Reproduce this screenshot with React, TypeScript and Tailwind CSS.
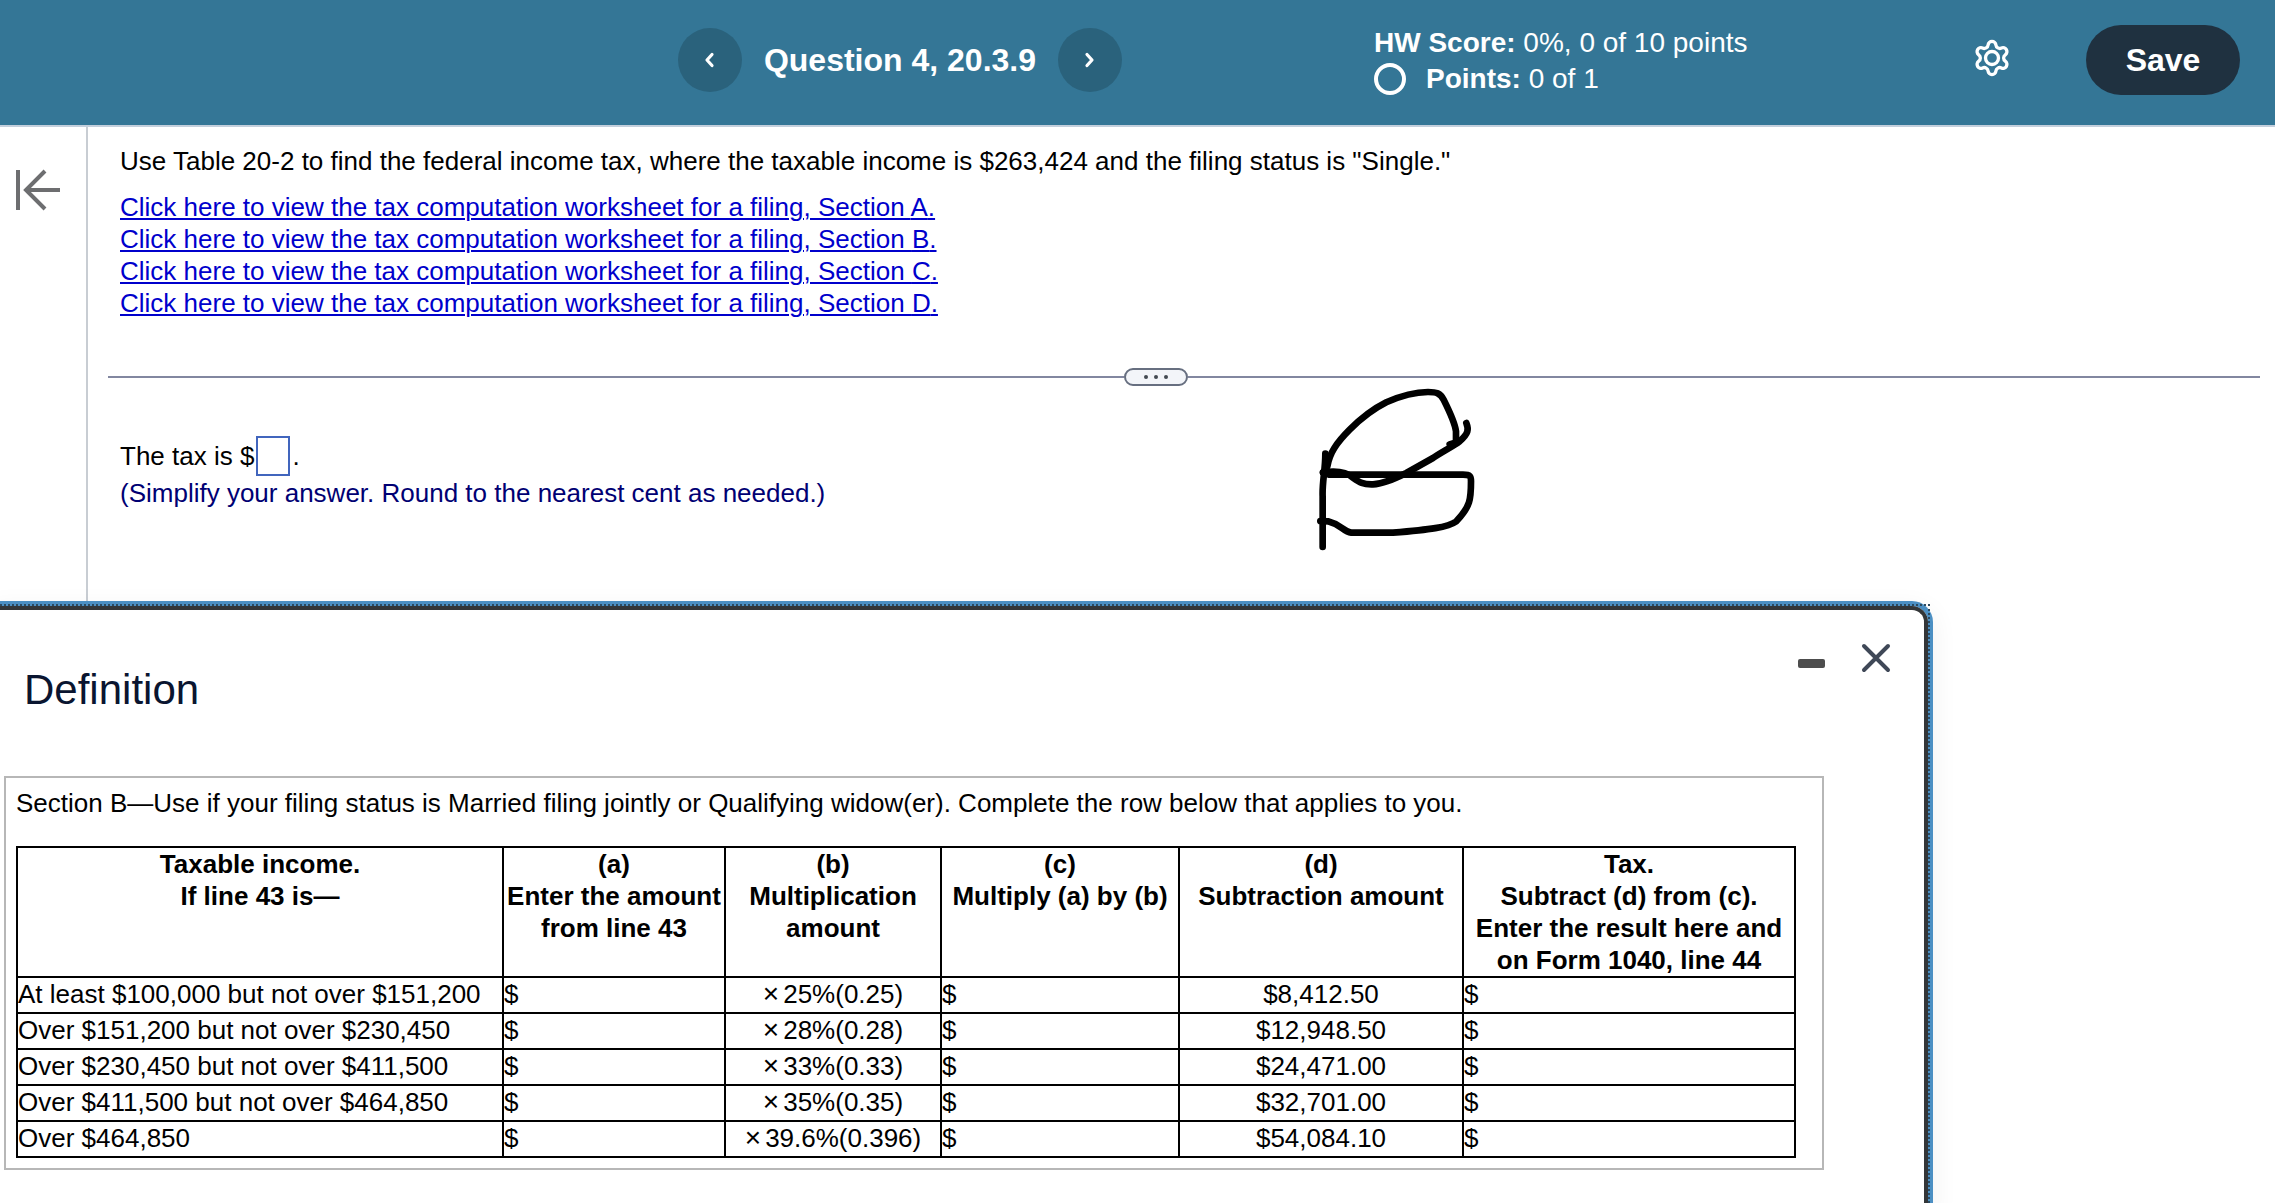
import React from 'react';

const sections = ['A', 'B', 'C', 'D'];

const columns = [
  { width: 'w-[486px]', lines: ['Taxable income.', 'If line 43 is—'] },
  { width: 'w-[222px]', lines: ['(a)', 'Enter the amount', 'from line 43'] },
  { width: 'w-[216px]', lines: ['(b)', 'Multiplication', 'amount'] },
  { width: 'w-[238px]', lines: ['(c)', 'Multiply (a) by (b)'] },
  { width: 'w-[284px]', lines: ['(d)', 'Subtraction amount'] },
  { width: 'w-[332px]', lines: ['Tax.', 'Subtract (d) from (c).', 'Enter the result here and', 'on Form 1040, line 44'] },
];

const brackets = [
  { income: 'At least $100,000 but not over $151,200', rate: '25%(0.25)', subtraction: '$8,412.50' },
  { income: 'Over $151,200 but not over $230,450', rate: '28%(0.28)', subtraction: '$12,948.50' },
  { income: 'Over $230,450 but not over $411,500', rate: '33%(0.33)', subtraction: '$24,471.00' },
  { income: 'Over $411,500 but not over $464,850', rate: '35%(0.35)', subtraction: '$32,701.00' },
  { income: 'Over $464,850', rate: '39.6%(0.396)', subtraction: '$54,084.10' },
];

const Chevron = ({ d }: { d: string }) => (
  <svg className="w-6 h-6" viewBox="0 0 24 24" fill="none" stroke="currentColor" strokeWidth="3.2" strokeLinecap="round" strokeLinejoin="round">
    <path d={d} />
  </svg>
);

const Header = () => (
  <header className="flex items-center justify-end h-[127px] pb-[5px] pr-[35px] bg-[#347696] border-b-2 border-[#c3cfdc] text-white">
    <div className="flex-1 flex justify-end items-center gap-[22px]">
      <button aria-label="Previous question" className="w-16 h-16 rounded-full bg-[#2a627c] flex items-center justify-center">
        <Chevron d="M14 6.5 9 12l5 5.5" />
      </button>
      <h1 className="text-[32px] leading-10 font-bold whitespace-nowrap">Question 4, 20.3.9</h1>
      <button aria-label="Next question" className="w-16 h-16 rounded-full bg-[#2a627c] flex items-center justify-center">
        <Chevron d="M9 6.5l5 5.5-5 5.5" />
      </button>
    </div>
    <div className="w-[598px] ml-[252px] pt-[2px] text-[28px] leading-9">
      <p><b>HW Score:</b> 0%, 0 of 10 points</p>
      <p className="flex items-center gap-5">
        <span className="w-8 h-8 rounded-full border-4 border-white" />
        <span><b>Points:</b> 0 of 1</span>
      </p>
    </div>
    <button aria-label="Settings" className="mr-[74px] mb-1">
      <svg className="w-10 h-10" viewBox="0 0 24 24" fill="none" stroke="currentColor" strokeWidth="2" strokeLinejoin="round">
        <path d="M9.671 4.136a2.34 2.34 0 0 1 4.659 0 2.34 2.34 0 0 0 3.319 1.915 2.34 2.34 0 0 1 2.33 4.033 2.34 2.34 0 0 0 0 3.831 2.34 2.34 0 0 1-2.33 4.033 2.34 2.34 0 0 0-3.319 1.915 2.34 2.34 0 0 1-4.659 0 2.34 2.34 0 0 0-3.32-1.915 2.34 2.34 0 0 1-2.33-4.033 2.34 2.34 0 0 0 0-3.831A2.34 2.34 0 0 1 6.35 6.051a2.34 2.34 0 0 0 3.319-1.915z" />
        <circle cx="12" cy="12" r="3.9" />
      </svg>
    </button>
    <button className="w-[154px] h-[70px] rounded-full bg-[#1f3140] text-[32px] leading-10 font-bold">Save</button>
  </header>
);

const Scribble = () => (
  <svg className="absolute left-[1225px] top-[256px] w-[167px] h-[170px]" viewBox="700 100 501 510" fill="none" stroke="#000" strokeWidth="20" strokeLinecap="round" strokeLinejoin="round">
    <path d="M737 312C737 360 727 400 729 440V592" />
    <path d="M743 350C750 310 770 280 810 240C850 200 880 178 920 158C960 140 1010 127 1045 127C1070 127 1082 130 1092 150C1106 178 1126 220 1129 245V278L1110 284" />
    <path d="M1160 220C1168 240 1166 252 1140 275C1120 290 1085 308 1060 325L980 370C940 390 910 403 880 404C850 405 840 398 820 384C800 366 770 362 730 368" />
    <path d="M730 369L748 375H1150C1172 375 1174 380 1174 395C1174 450 1172 470 1130 515C1105 533 1050 540 940 549H815C790 545 785 525 745 515L722 514" />
  </svg>
);

const Question = () => (
  <main className="flex h-[474px]">
    <aside className="w-[88px] shrink-0 border-r-2 border-[#c8cdd3] pl-[14px] pt-[41px]">
      <button aria-label="Collapse panel" className="block text-[#6d6e70]">
        <svg className="w-12 h-11" viewBox="0 0 48 44" fill="none" stroke="currentColor" strokeWidth="4">
          <path d="M4 2v40M46 22H11M31 3 12 22l19 19" />
        </svg>
      </button>
    </aside>
    <div className="relative flex-1 pl-5 pr-[15px] pt-[18px]">
      <p className="px-3">Use Table 20-2 to find the federal income tax, where the taxable income is $263,424 and the filing status is "Single."</p>
      <ul className="px-3 mt-[14px]">
        {sections.map(section => (
          <li key={section}>
            <a href="#definition" className="text-[#0000cc] underline decoration-2 underline-offset-2">
              Click here to view the tax computation worksheet for a filing, Section {section}.
            </a>
          </li>
        ))}
      </ul>

      <div className="flex items-center mt-[49px]">
        <span className="flex-[1016] h-[2px] bg-[#8287a0]" />
        <button aria-label="Resize panels" className="w-16 h-[18px] rounded-full border-2 border-[#676f80] bg-[#f3f5f9] flex items-center justify-center gap-[6px]">
          <span className="w-1 h-1 rounded-full bg-[#444a52]" />
          <span className="w-1 h-1 rounded-full bg-[#444a52]" />
          <span className="w-1 h-1 rounded-full bg-[#444a52]" />
        </button>
        <span className="flex-[1072] h-[2px] bg-[#8287a0]" />
      </div>

      <div className="flex items-center px-3 mt-[50px]">
        <label htmlFor="tax">The tax is $</label>
        <input id="tax" type="text" className="w-[34px] h-10 ml-[2px] mr-[2px] border-2 border-[#4165bd] bg-white" />
        <span>.</span>
      </div>
      <p className="px-3 mt-[1px] text-[#000073]">(Simplify your answer. Round to the nearest cent as needed.)</p>
      <Scribble />
    </div>
  </main>
);

const Definition = () => (
  <section id="definition" className="relative flex-1 mt-[5px] mr-[347px] border-t-4 border-r-4 border-[#333638] rounded-tr-[16px] shadow-[0_0_0_5px_#4b8fc3,0_8px_24px_8px_rgba(0,0,0,0.05)]">
    {/* focus ring dots */}
    <span className="absolute -top-[6px] -right-[6px] left-0 bottom-0 border-t-2 border-r-2 border-dotted border-[#2c4a60] pointer-events-none" />
    <div className="flex justify-between pt-[30px] pl-6 pr-[32px]">
      <h2 className="mt-6 text-[42px] leading-[52px] text-[#0a1530]">Definition</h2>
      <div className="flex gap-[34px]">
        <button aria-label="Minimize" className="w-7 h-9 flex items-center pt-[10px]">
          <span className="w-[27px] h-[9px] rounded-[2px] bg-[#4d4d4d]" />
        </button>
        <button aria-label="Close" className="w-8 h-9 text-[#3f4857]">
          <svg className="w-8 h-8" viewBox="0 0 32 32" fill="none" stroke="currentColor" strokeWidth="4" strokeLinecap="round">
            <path d="M4 4l24 24M28 4 4 28" />
          </svg>
        </button>
      </div>
    </div>

    <div className="mt-[60px] ml-1 mr-[100px] border-2 border-[#b7b7b7] pt-[9px] pl-[10px] pb-[10px]">
      <p>Section B—Use if your filing status is Married filing jointly or Qualifying widow(er). Complete the row below that applies to you.</p>
      <table className="mt-[27px] w-[1780px] table-fixed border-collapse border-2 border-black">
        <thead>
          <tr>
            {columns.map(col => (
              <th key={col.lines[0]} className={`${col.width} border-2 border-black p-0 align-top font-bold text-center whitespace-nowrap`}>
                {col.lines.map(line => <span key={line} className="block">{line}</span>)}
              </th>
            ))}
          </tr>
        </thead>
        <tbody>
          {brackets.map(row => (
            <tr key={row.income}>
              <td className="border-2 border-black p-0 pb-[2px]">{row.income}</td>
              <td className="border-2 border-black p-0 pb-[2px]">$</td>
              <td className="border-2 border-black p-0 pb-[2px] text-center"><span className="mr-1 text-[28px]">×</span>{row.rate}</td>
              <td className="border-2 border-black p-0 pb-[2px]">$</td>
              <td className="border-2 border-black p-0 pb-[2px] text-center">{row.subtraction}</td>
              <td className="border-2 border-black p-0 pb-[2px]">$</td>
            </tr>
          ))}
        </tbody>
      </table>
    </div>
  </section>
);

export default function App() {
  return (
    <div className="min-h-screen flex flex-col overflow-hidden bg-white text-black text-[26px] leading-8 font-['Liberation_Sans',Arial,sans-serif]">
      <Header />
      <Question />
      <Definition />
    </div>
  );
}
